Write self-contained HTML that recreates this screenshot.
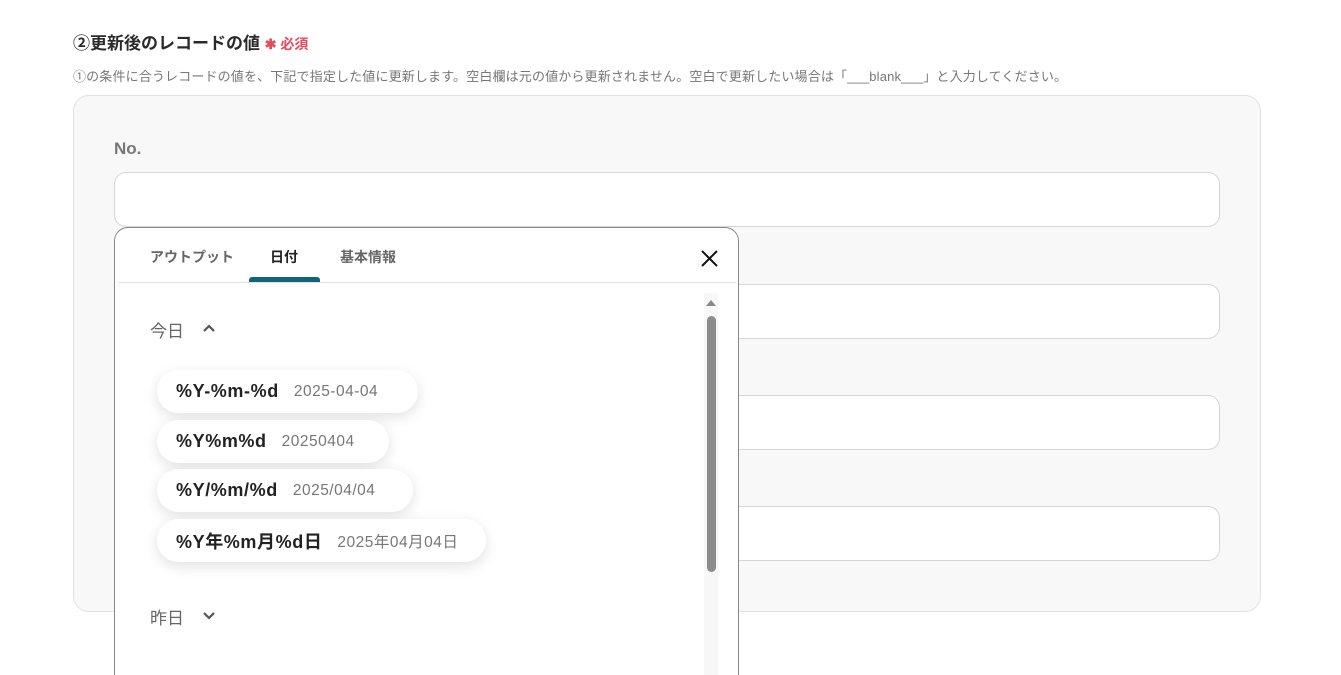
<!DOCTYPE html>
<html style="height:675px;overflow:hidden"><head><meta charset="utf-8"><style>
*{box-sizing:border-box;margin:0;padding:0}
body{width:1341px;height:675px;overflow:hidden;background:#fff;font-family:"Liberation Sans","Noto Sans CJK JP",sans-serif;position:relative;color:#333}
.a{position:absolute}
.title{left:73px;top:29px;font-size:17px;font-weight:bold;color:#2a2a2a}
.req{color:#e8495d;font-size:14px;font-weight:bold}
.desc{left:73px;top:66px;font-size:13px;color:#777;white-space:nowrap;letter-spacing:.15px}
.panel{left:73px;top:95px;width:1188px;height:517px;background:#f8f8f8;border:1px solid #e2e2e2;border-radius:16px}
.lbl{left:114px;top:139px;font-size:17px;font-weight:bold;color:#777}
.inp{left:114px;width:1106px;height:55px;background:#fff;border:1px solid #d3d6dc;border-radius:12px}
.pop{left:114px;top:227px;width:625px;height:470px;background:#fff;border:1px solid #888;border-radius:14px;overflow:hidden}
.tab{top:247px;font-size:14px;color:#666;font-weight:bold}
.pill{left:157px;height:43px;background:#fff;border-radius:22px;box-shadow:0 4px 14px rgba(0,0,0,.12);display:flex;align-items:center;padding-left:19px;white-space:nowrap}
.pill b{font-size:18px;color:#222;margin-right:15px;letter-spacing:.6px}
.pill span{font-size:15.5px;color:#777;letter-spacing:.5px}
</style></head><body>
<div class="a title">②更新後のレコードの値 <span class="req">✱ 必須</span></div>
<div class="a desc">①の条件に合うレコードの値を、下記で指定した値に更新します。空白欄は元の値から更新されません。空白で更新したい場合は「___blank___」と入力してください。</div>
<div class="a panel"></div>
<div class="a lbl">No.</div>
<div class="a inp" style="top:172px"></div>
<div class="a inp" style="top:284px"></div>
<div class="a inp" style="top:395px"></div>
<div class="a inp" style="top:506px"></div>
<div class="a pop"></div>
<div class="a tab" style="left:150px">アウトプット</div>
<div class="a tab" style="left:270px;color:#222">日付</div>
<div class="a tab" style="left:340px">基本情報</div>
<div class="a" style="left:249px;top:277px;width:71px;height:5px;background:#0f6478;border-radius:3px 3px 0 0"></div>
<div class="a" style="left:118px;top:282px;width:618px;height:1px;background:#e2e2e2"></div>
<svg class="a" style="left:700px;top:249px" width="19" height="19" viewBox="0 0 19 19"><path d="M2 2L17 17M17 2L2 17" stroke="#111" stroke-width="2"/></svg>
<div class="a" style="left:704px;top:293px;width:14px;height:382px;background:#f7f7f7"></div>
<div class="a" style="left:706px;top:300px;width:0;height:0;border-left:5px solid transparent;border-right:5px solid transparent;border-bottom:6px solid #888"></div>
<div class="a" style="left:707px;top:316px;width:9px;height:256px;background:#8c8c8c;border-radius:5px"></div>
<div class="a" style="left:150px;top:317px;font-size:17px;color:#666">今日</div>
<svg class="a" style="left:201px;top:322px" width="16" height="12"><path d="M3 9L8 4L13 9" stroke="#555" stroke-width="2.2" fill="none"/></svg>
<div class="a pill" style="top:370px;width:261px"><b>%Y-%m-%d</b><span>2025-04-04</span></div>
<div class="a pill" style="top:420px;width:232px"><b>%Y%m%d</b><span>20250404</span></div>
<div class="a pill" style="top:469px;width:256px"><b>%Y/%m/%d</b><span>2025/04/04</span></div>
<div class="a pill" style="top:519px;width:329px"><b>%Y年%m月%d日</b><span>2025年04月04日</span></div>
<div class="a" style="left:150px;top:604px;font-size:17px;color:#666">昨日</div>
<svg class="a" style="left:201px;top:610px" width="16" height="12"><path d="M3 3L8 8L13 3" stroke="#555" stroke-width="2.2" fill="none"/></svg>
</body></html>
